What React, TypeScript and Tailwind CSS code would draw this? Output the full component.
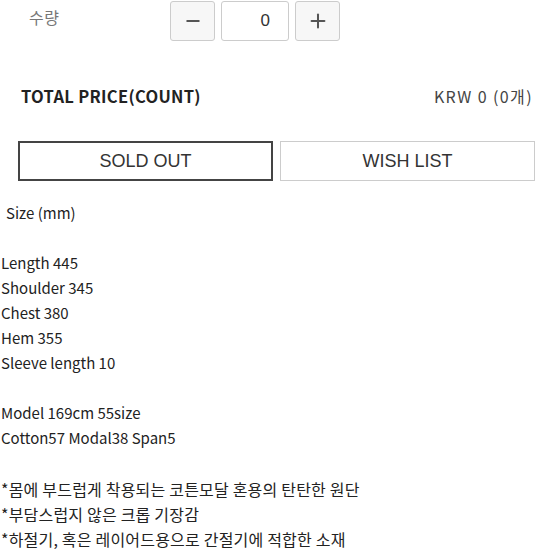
import { MinusIcon, PlusIcon } from 'lucide-react';

const kr = { fontFamily: '"Noto Sans CJK KR", "Noto Sans", sans-serif' };
const arial = { fontFamily: '"Liberation Sans", Arial, sans-serif' };

const specs = ['Length 445', 'Shoulder 345', 'Chest 380', 'Hem 355', 'Sleeve length 10'];
const notes = [
  '*몸에 부드럽게 착용되는 코튼모달 혼용의 탄탄한 원단',
  '*부담스럽지 않은 크롭 기장감',
  '*하절기, 혹은 레이어드용으로 간절기에 적합한 소재',
];

export default function App() {
  return (
    <div className="w-[554px] h-[554px] overflow-hidden bg-white text-[#222]" style={kr}>
      {/* quantity */}
      <div className="flex items-center h-[42px]">
        <span className="w-[170px] pl-[29px] pb-[8px] text-[16px] tracking-[0.5px] text-[#777]">수량</span>
        <div className="flex gap-[6px]" style={arial}>
          <button className="w-[45px] h-[40px] border border-[#ccc] rounded-[3px] bg-[#f7f7f7] flex items-center justify-center text-[#555]">
            <MinusIcon size={20} strokeWidth={2.2} />
          </button>
          <div className="w-[68px] h-[40px] border border-[#ccc] rounded-[3px] flex items-center justify-end pr-[18px] text-[17px] text-[#333]">
            0
          </div>
          <button className="w-[45px] h-[40px] border border-[#ccc] rounded-[3px] bg-[#f7f7f7] flex items-center justify-center text-[#555]">
            <PlusIcon size={22} strokeWidth={2.2} />
          </button>
        </div>
      </div>

      {/* total */}
      <div className="flex justify-between items-center pl-[21px] pr-[21px] mt-[42px] h-[24px]">
        <span className="text-[16.5px] font-bold tracking-[0.3px] text-[#222]">TOTAL PRICE(COUNT)</span>
        <span className="text-[16px] tracking-[1.4px] text-[#444]">KRW 0 (0개)</span>
      </div>

      {/* actions */}
      <div className="flex gap-[7px] px-[18px] mt-[33px]" style={arial}>
        <button className="w-[255px] h-[40px] border-2 border-[#444] text-[18px] text-[#333] bg-white">SOLD OUT</button>
        <button className="w-[255px] h-[40px] border border-[#ccc] text-[18px] text-[#333] bg-white">WISH LIST</button>
      </div>

      {/* description */}
      <div className="mt-[19px] text-[15px] leading-[25px] text-[#222]">
        <p className="pl-[6px] text-[15px]">Size (mm)</p>
        <div className="mt-[25px] pl-px">
          {specs.map((s) => (
            <p key={s}>{s}</p>
          ))}
        </div>
        <div className="mt-[25px] pl-px">
          <p>Model 169cm 55size</p>
          <p>Cotton57 Modal38 Span5</p>
        </div>
        <div className="mt-[27px] pl-px text-[16px] tracking-[0.2px]">
          {notes.map((n) => (
            <p key={n}>{n}</p>
          ))}
        </div>
      </div>
    </div>
  );
}
